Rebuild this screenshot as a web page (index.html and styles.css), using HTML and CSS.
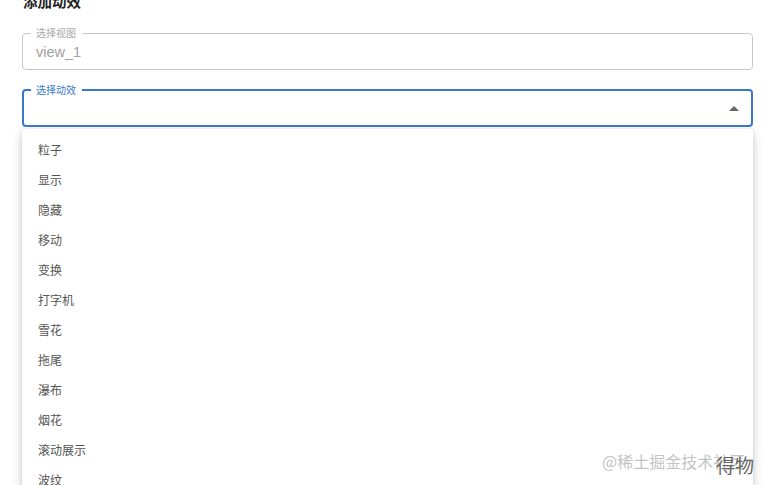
FILE: index.html
```html
<!DOCTYPE html>
<html lang="zh">
<head>
<meta charset="utf-8">
<link rel="stylesheet" href="styles.css">
</head>
<body>
<div class="page">
  <h2 class="title">添加动效</h2>
  <fieldset class="field">
    <legend class="label">选择视图</legend>
    <div class="value">view_1</div>
  </fieldset>
  <fieldset class="field focused">
    <legend class="label">选择动效</legend>
    <div class="value"></div>
    <span class="arrow"></span>
  </fieldset>
  <ul class="menu">
    <li>粒子</li>
    <li>显示</li>
    <li>隐藏</li>
    <li>移动</li>
    <li>变换</li>
    <li>打字机</li>
    <li>雪花</li>
    <li>拖尾</li>
    <li>瀑布</li>
    <li>烟花</li>
    <li>滚动展示</li>
    <li>波纹</li>
  </ul>
</div>
<div class="wm">@稀土掘金技术社区</div>
<div class="wm2">得物</div>
</body>
</html>
```
FILE: styles.css
```css
html, body { margin: 0; padding: 0; background: #fff; height: 100%; overflow: hidden; }
body { font-family: "Noto Sans CJK SC", "Noto Sans", sans-serif; position: relative; }
.page { padding: 0 13px 0 22px; margin-top: -11px; }
.title { margin: 0 0 0 1px; font-size: 14.5px; font-weight: 700; color: #222; line-height: 24px; height: 38px; }
.field {
  margin: 0; box-sizing: border-box; height: 43px;
  border: 1px solid #c8c8c8; border-radius: 4px;
  padding: 0 13px 0 8px; position: relative;
  display: flex; align-items: center; min-width: 0;
}
.field + .field { margin-top: 14px; }
.label { font-size: 10px; color: #aaa; padding: 0 6px 0 5px; line-height: 12px; margin-left: 0; }
.value { font-family: "Liberation Sans", "Noto Sans CJK SC", sans-serif; font-size: 14.5px; color: #a0a0a0; padding-left: 5px; margin-top: -5px; flex: 1; height: 20px; line-height: 20px; }
.focused { border: 2px solid #3a78c9; padding: 0 12px 0 7px; }
.focused .label { color: #3a78c9; }
.arrow { width: 0; height: 0; border-left: 5px solid transparent; border-right: 5px solid transparent; border-bottom: 5px solid #666; margin-top: -5px; }
.menu {
  list-style: none; margin: 2px 0 0; padding: 6px 0 0;
  background: #fff; border-radius: 4px;
  box-shadow: 0 4px 12px rgba(0,0,0,0.18), 0 1px 4px rgba(0,0,0,0.1);
}
.menu li { height: 30px; line-height: 30px; padding-left: 16px; font-size: 12px; color: #555; }
.wm { position: absolute; left: 602px; top: 449px; font-size: 16px; color: #c4c4c4; white-space: nowrap; }
.wm2 { position: absolute; left: 716px; top: 451px; font-size: 19px; color: #666; }
```
